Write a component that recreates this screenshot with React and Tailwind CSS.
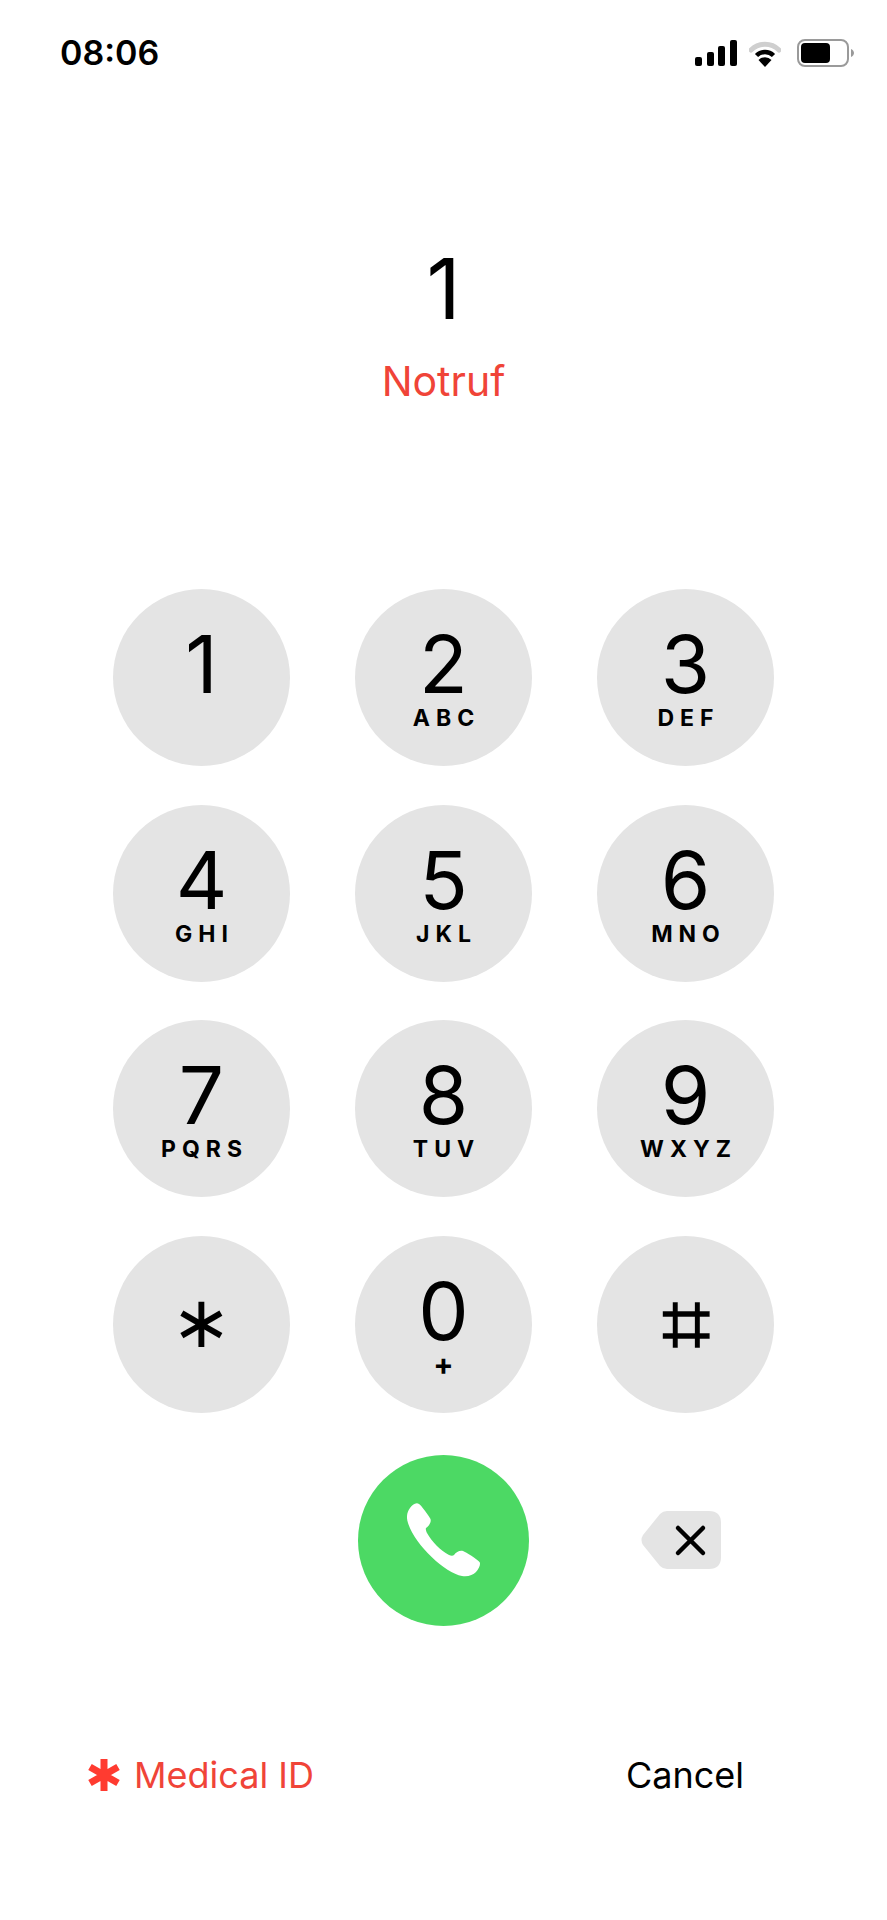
import React from 'react';

const keys = [
  ['1', ''],
  ['2', 'ABC'],
  ['3', 'DEF'],
  ['4', 'GHI'],
  ['5', 'JKL'],
  ['6', 'MNO'],
  ['7', 'PQRS'],
  ['8', 'TUV'],
  ['9', 'WXYZ'],
  ['0', '+'],
];

const Key = ({ digit, letters }) => (
  <button className="w-[177px] h-[177px] rounded-full bg-[#e4e4e4] flex flex-col items-center pt-[31px] text-black">
    <span className="text-[80px] leading-[88px] font-normal h-[88px]">{digit}</span>
    {letters === '+' ? (
      <span className="text-[30px] leading-[26px] font-bold mt-[-4px]">+</span>
    ) : letters ? (
      <span className="text-[23px] leading-[26px] font-bold tracking-[6px] ml-[6px] mt-[-3px]">{letters}</span>
    ) : null}
  </button>
);

const SymbolKey = ({ children, className }) => (
  <button className={`w-[177px] h-[177px] rounded-full bg-[#e4e4e4] flex items-center justify-center text-black ${className}`}>
    {children}
  </button>
);

const StatusIcons = () => (
  <div className="flex items-center">
    <svg width="42" height="26" viewBox="0 0 42 26" fill="#000">
      <rect x="0" y="17" width="7" height="9" rx="2" />
      <rect x="12" y="12" width="7" height="14" rx="2" />
      <rect x="23" y="6" width="7" height="20" rx="2" />
      <rect x="35" y="0" width="7" height="26" rx="2" />
    </svg>
    <svg width="32" height="27" viewBox="0 0 32 27" className="ml-[12px]">
      <path d="M2 10 A20 20 0 0 1 30 10" fill="none" stroke="#cfcfcf" strokeWidth="5" strokeLinecap="round" />
      <path d="M7.5 15.5 A12 12 0 0 1 24.5 15.5" fill="none" stroke="#000" strokeWidth="4.5" strokeLinecap="butt" />
      <path d="M16 27 L9.5 20 A9 9 0 0 1 22.5 20 Z" fill="#000" />
    </svg>
    <svg width="57" height="28" viewBox="0 0 57 28" className="ml-[16px]">
      <rect x="1" y="1" width="50" height="26" rx="7" fill="none" stroke="#9a9a9a" strokeWidth="2" />
      <rect x="4" y="4" width="29" height="20" rx="4" fill="#000" />
      <path d="M54 10 C56 11 57 12.5 57 14 C57 15.5 56 17 54 18 Z" fill="#9a9a9a" />
    </svg>
  </div>
);

const PhoneIcon = () => (
  <svg width="74" height="74" viewBox="0 0 74 74" fill="#fff">
    <path d="M3 5 C5 2 9 -1 12 1 C14 2 22 13 23.5 16 C24.5 19 22 23 19 25 C18.5 26 19 28 20 30 C25 39 33 47 42 52 C44 53 46 53 47 52 C49 49 53 47 56 48 C59 49 70 56 72.5 59 C74 61 72 66 69 69 C66 72 61 74 55 73 C38 70 8 42 1 20 C-1 14 0 9 3 5 Z" />
  </svg>
);

const Backspace = () => (
  <svg width="80" height="58" viewBox="0 0 80 58">
    <path
      d="M26 0 H68 Q80 0 80 12 V46 Q80 58 68 58 H26 Q22 58 19 55 L2 34 Q-1 29 2 24 L19 3 Q22 0 26 0 Z"
      fill="#e4e4e4"
    />
    <path d="M37 17 L62 42 M62 17 L37 42" stroke="#000" strokeWidth="4.5" strokeLinecap="round" />
  </svg>
);

const MedicalStar = () => (
  <svg width="34" height="34" viewBox="0 0 34 34" stroke="#ff3b30" strokeWidth="7">
    <path d="M17 1 V33 M3 9 L31 25 M31 9 L3 25" />
  </svg>
);

export default function App() {
  return (
    <div className="w-[887px] h-[1920px] bg-white overflow-hidden font-['Inter',sans-serif] flex flex-col">
      {/* Status bar */}
      <div className="flex items-center justify-between pl-[60px] pr-[33px] pt-[33px] h-[73px]">
        <span className="text-[34px] leading-[40px] font-semibold text-black">08:06</span>
        <StatusIcons />
      </div>

      {/* Number display */}
      <div className="flex flex-col items-center mt-[166px] h-[350px]">
        <div className="text-[84px] leading-[100px] text-black">1</div>
        <div className="text-[41px] leading-[48px] text-[#f04438] mt-[18px]">Notruf</div>
      </div>

      {/* Keypad */}
      <div className="grid grid-cols-[177px_177px_177px] gap-x-[65px] gap-y-[38.5px] justify-center">
        {keys.slice(0, 9).map(([digit, letters]) => (
          <Key key={digit} digit={digit} letters={letters} />
        ))}
        <SymbolKey className="text-[72px] leading-none">
          <span className="font-['DejaVu_Sans',sans-serif] mt-[-4px]">∗</span>
        </SymbolKey>
        <Key digit={keys[9][0]} letters={keys[9][1]} />
        <SymbolKey className="text-[86px] leading-none">
          <span className="font-['DejaVu_Sans',sans-serif] [-webkit-text-stroke:1.5px_#000]">⌗</span>
        </SymbolKey>
      </div>

      {/* Call row */}
      <div className="grid grid-cols-[177px_177px_177px] gap-x-[65px] justify-center items-center mt-[42px]">
        <div />
        <div className="flex justify-center">
          <button className="w-[171px] h-[171px] rounded-full bg-[#4cd964] flex items-center justify-center">
            <PhoneIcon />
          </button>
        </div>
        <div className="flex justify-start pl-[44px]">
          <Backspace />
        </div>
      </div>

      {/* Bottom actions */}
      <div className="flex items-center justify-between pl-[87px] pr-[143px] mt-[127px] text-[36px] leading-[44px]">
        <div className="flex items-center gap-[13px] text-[#f04438]">
          <MedicalStar />
          <span>Medical ID</span>
        </div>
        <span className="text-black">Cancel</span>
      </div>
    </div>
  );
}
